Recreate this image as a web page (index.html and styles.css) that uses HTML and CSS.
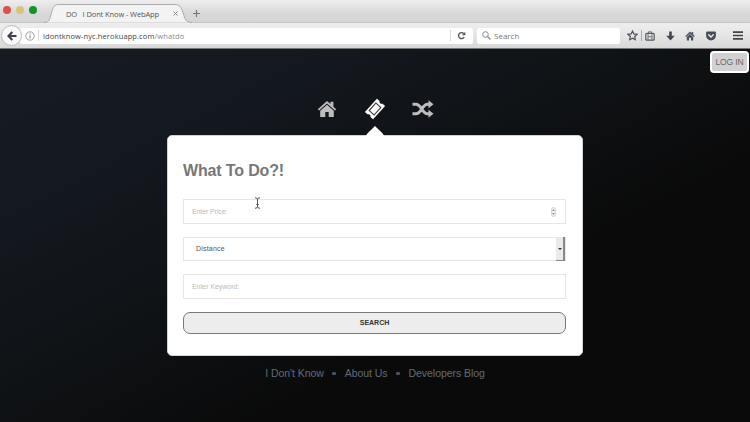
FILE: index.html
```html
<!DOCTYPE html>
<html lang="en">
<head>
<meta charset="utf-8">
<title>DO I Dont Know - WebApp</title>
<link rel="stylesheet" href="styles.css">
</head>
<body>
<header class="browser">
  <div class="tabs">
    <div class="lights"><i class="light red"></i><i class="light yellow"></i><i class="light green"></i></div>
    <div class="tab">
      <svg class="tab-shape" width="148" height="19" viewBox="0 0 158 19" preserveAspectRatio="none"><path d="M0 18.500C6 18.500 6 15 8 9C9.500 3 11 .5 16 .5H139C145 .5 146.500 3 148.500 9C150.500 15 151 18.500 158 18.500" fill="#f3f3f3" stroke="#aaa"/></svg>
      <span class="tab-title">DO &nbsp; I Dont Know - WebApp</span>
      <svg class="tab-close" width="5" height="5" viewBox="0 0 5 5"><path d="M.5.5l4 4M4.500.5l-4 4" stroke="#888"/></svg>
    </div>
    <svg class="plus" width="7" height="7" viewBox="0 0 7 7"><path d="M3.500 0v7M0 3.500h7" stroke="#777" stroke-width="1.200"/></svg>
  </div>
  <div class="toolbar">
    <div class="back"><svg width="10" height="10" viewBox="0 0 10 10"><path d="M5.300 1L1.500 5l3.800 4M2 5h7.500" fill="none" stroke="#3b424c" stroke-width="2.100"/></svg></div>
    <div class="address">
      <svg width="10" height="10" viewBox="0 0 10 10"><circle cx="5" cy="5" r="4.200" fill="none" stroke="#888" stroke-width=".8"/><path d="M5 4.400v3M5 2.400v1" stroke="#777"/></svg>
      <span class="rule"></span>
      <span class="url">idontknow-nyc.herokuapp.com<em>/whatdo</em></span>
      <span class="rule"></span>
      <svg class="reload" width="9" height="9" viewBox="0 0 9 9"><path d="M7.200 6A3 3 0 1 1 6.700 2.500" fill="none" stroke="#555" stroke-width="1.400"/><path d="M8.300.8v3.500H4.800z" fill="#555"/></svg>
    </div>
    <div class="find">
      <svg width="9" height="9" viewBox="0 0 9 9"><circle cx="3.500" cy="3.500" r="2.800" fill="none" stroke="#888"/><path d="M5.500 5.500l3 3" stroke="#888" stroke-width="1.200"/></svg>
      <span>Search</span>
    </div>
    <div class="tools">
      <svg width="11" height="11" viewBox="0 0 11 11"><path d="M5.500 1l1.400 2.900 3.100.4-2.300 2.200.6 3.200-2.800-1.500-2.800 1.500.6-3.200L1 4.300l3.100-.4z" fill="none" stroke="#4c525b" stroke-width="1.200"/></svg>
      <span class="rule dark"></span>
      <svg width="10" height="10" viewBox="0 0 10 10"><rect x=".8" y="2.300" width="8.400" height="6.900" rx="1" fill="none" stroke="#555b63" stroke-width="1.200"/><path d="M3.500 2.300V.8h3v1.500M3 2.500v6.500M7 2.500v6.500M3 5.700h4" fill="none" stroke="#666c73" stroke-width=".9"/></svg>
      <svg class="t-down" width="9" height="10" viewBox="0 0 9 10"><path d="M3.200.5h2.600v4.300h3L4.500 9.500.2 4.800h3z" fill="#414852"/></svg>
      <svg class="t-home" width="10" height="10" viewBox="0 0 10 10"><path d="M5 .5l1.800 1.700V1h1.400v2.600l1.600 1.600-.8.800-4-3.500L1 6l-.8-.8zM5 2.900l3.200 3V9.500H6V6.800H4v2.700H1.800V5.900z" fill="#4b525b"/></svg>
      <svg class="t-pocket" width="10" height="10" viewBox="0 0 10 10"><path d="M1.500.5h7A1.300 1.300 0 0 1 9.900 1.900V4.600a4.900 4.900 0 0 1-9.800 0V1.900A1.300 1.300 0 0 1 1.500.5z" fill="#454c56"/><path d="M2.700 3.800L5 6l2.300-2.200" fill="none" stroke="#eee" stroke-width="1.300" stroke-linecap="round"/></svg>
      <svg class="t-menu" width="10" height="9" viewBox="0 0 10 9"><path d="M0 1.200h10M0 4.500h10M0 7.800h10" stroke="#444" stroke-width="1.700"/></svg>
    </div>
  </div>
</header>
<main class="page">
  <button class="login">LOG IN</button>
  <nav class="choices">
    <svg width="20" height="18" viewBox="0 0 20 18"><path d="M10 1L13.500 4.100V1.800H16.400V6.700L19.200 9.200 18 10.500 10 3.400 2 10.500 .8 9.200z" fill="#bdbdbd"/><path d="M10 4.800L16.800 10.800V17H11.700V12H8.300V17H3.200V10.800z" fill="#bdbdbd"/></svg>
    <svg class="ticket" width="22" height="22" viewBox="0 0 22 22"><g transform="rotate(-48 11 11)"><path d="M2 5.500H20V9A2.200 2.200 0 0 0 20 13V16.500H2V13A2.200 2.200 0 0 0 2 9z" fill="#fff"/><path d="M6 7.700H16V14.300H6z" fill="none" stroke="#383838" stroke-width="1.100"/></g></svg>
    <svg width="22" height="18" viewBox="0 0 22 18"><path d="M.5 4.200H4C9.500 4.200 10 13.800 15.500 13.800H17M.5 13.800H4C9.500 13.800 10 4.200 15.500 4.200H17" fill="none" stroke="#bdbdbd" stroke-width="3"/><path d="M16.500.2L21.500 4.200 16.500 8.200zM16.500 9.800L21.500 13.800 16.500 17.800z" fill="#bdbdbd"/></svg>
  </nav>
  <section class="card">
    <svg class="pointer" width="18" height="10" viewBox="0 0 18 10"><path d="M0 10C1 7 3 6 5 4L9 0l4 4c2 2 4 3 5 6z" fill="#fff"/></svg>
    <h1>What To Do?!</h1>
    <div class="field"><span>Enter Price:</span>
      <svg width="5" height="10" viewBox="0 0 5 10"><rect x=".5" y=".5" width="4" height="9" rx="2" fill="#f3f3f3" stroke="#d6d6d6"/><path d="M1 4l1.500-2L4 4zM1 6l1.500 2L4 6z" fill="#999"/></svg>
    </div>
    <div class="field select"><span>Distance</span><b><i></i></b></div>
    <div class="field"><span class="keyword">Enter Keyword:</span></div>
    <button class="search">SEARCH</button>
    <svg class="cursor" width="7" height="12" viewBox="0 0 7 12"><path d="M1 .7Q3.500.7 3.500 2.500 3.500.7 6 .7M3.500 2v8M1 11.300Q3.500 11.300 3.500 9.500 3.500 11.300 6 11.300M2.300 7.500h2.400" fill="none" stroke="#555"/></svg>
  </section>
  <footer><a>I Don't Know</a><i></i><a>About Us</a><i></i><a>Developers Blog</a></footer>
</main>
</body>
</html>
```
FILE: styles.css
```css
* { box-sizing: border-box; }
body {
  margin: 0;
  width: 750px;
  height: 422px;
  overflow: hidden;
  font-family: "Liberation Sans", Arial, sans-serif;
  background: #0a0a0a;
}
svg { display: block; flex: none; }
button { font-family: inherit; padding: 0; }

.browser { height: 49px; border-bottom: 1px solid #777; }
.tabs {
  height: 23px;
  display: flex;
  align-items: flex-start;
  background: linear-gradient(#efedef, #d8d8d8 60%, #d5d5d5);
  border-bottom: 1px solid #c4c4c4;
}
.lights { display: flex; gap: 5px; padding: 6px 0 0 3px; width: 44px; flex: none; }
.light { width: 8px; height: 8px; border-radius: 50%; }
.red { background: #dc514a; }
.yellow { background: #d8c47d; }
.green { background: #159329; }
.tab {
  position: relative;
  width: 148px;
  height: 19px;
  margin-top: 4px;
  display: flex;
  align-items: center;
  padding: 0 14px 0 22px;
  justify-content: space-between;
}
.tab-shape { position: absolute; left: 0; top: 0; }
.tab-title { position: relative; font: 7.5px "Open Sans", sans-serif; letter-spacing: -.11px; color: #555; white-space: pre; }
.tab-close { position: relative; }
.plus { margin: 10px 0 0 1px; }

.toolbar {
  height: 25px;
  display: flex;
  align-items: center;
  background: linear-gradient(#eee, #e5e5e5 50%, #d8d8d8);
}
.back {
  width: 21px;
  height: 21px;
  margin-left: 1px;
  display: flex;
  align-items: center;
  justify-content: center;
  border: 1px solid #bbb;
  border-radius: 50%;
  background: #fafafa;
  z-index: 1;
}
.address {
  width: 453px;
  height: 16px;
  margin-left: -2px;
  padding: 0 7px 0 5px;
  display: flex;
  align-items: center;
  background: #fff;
  border-radius: 2px;
}
.rule { width: 1px; height: 11px; background: #d8d8d8; margin-left: 3px; }
.url {
  flex: 1;
  margin-left: 4px;
  font: 7.5px "Open Sans", sans-serif;
  color: #444;
  letter-spacing: .1px;
}
.url em { font-style: normal; color: #888; }
.reload { margin-left: 6px; }
.find {
  width: 143px;
  height: 16px;
  margin-left: 4px;
  padding-left: 5px;
  display: flex;
  gap: 3px;
  align-items: center;
  background: #fff;
  border-radius: 2px;
  font: 8px "Open Sans", sans-serif;
  color: #777;
}
.tools { display: flex; align-items: center; margin-left: 7px; }
.rule.dark { background: #aaa; margin: 0 3px; }
.t-down { margin-left: 11px; }
.t-home { margin-left: 10px; }
.t-pocket { margin-left: 11px; }
.t-menu { margin-left: 17px; }

.page {
  position: relative;
  height: 373px;
  display: flex;
  flex-direction: column;
  align-items: center;
  background: linear-gradient(152deg, #161b22 0, #141920 22%, #0f1215 45%, #0a0a0a 66%);
}
.login {
  position: absolute;
  right: 1px;
  top: 2px;
  width: 39px;
  height: 22px;
  border: 2px solid #fff;
  border-radius: 4px;
  background: #d1d1d1;
  color: #666;
  font-size: 8.5px;
  letter-spacing: -.1px;
}
.choices { display: flex; align-items: center; height: 22px; margin: 49px 0 0; }
.ticket { margin: 0 26px 0 27px; }
.card {
  position: relative;
  width: 416px;
  height: 221px;
  margin-top: 15px;
  padding: 25px 16px 0 15px;
  border: 1px solid #cfd3d9;
  border-radius: 5px;
  background: #fff;
}
.pointer { position: absolute; left: 198px; top: -10px; }
.card h1 { margin: 0 0 18px; font-size: 16px; letter-spacing: -.15px; line-height: 20px; color: #777; }
.field {
  height: 25px;
  margin-bottom: 13px;
  padding: 0 9px 0 8px;
  display: flex;
  justify-content: space-between;
  align-items: center;
  border: 1px solid #e6e6e6;
  font-size: 7px;
  letter-spacing: -.1px;
  color: #bbb;
}
.select {
  height: 24px;
  padding: 0 0 0 12px;
  color: #555;
  letter-spacing: .2px;
}
.select b {
  width: 9px;
  height: 24px;
  display: flex;
  align-items: center;
  justify-content: center;
  background: #eaeaea;
  border-right: 2px solid #888;
  border-bottom: 1px solid #888;
}
.select i { border: 2px solid transparent; border-top-color: #333; border-bottom: 0; }
.keyword { letter-spacing: -.05px; }
.field span { margin-top: -1px; }
.search {
  display: block;
  width: 100%;
  height: 22px;
  padding-bottom: 2px;
  border: 1px solid #777;
  border-radius: 7px;
  background: #ededed;
  color: #333;
  font-size: 7px;
  font-weight: bold;
}
.cursor { position: absolute; left: 86px; top: 61px; }
footer { display: flex; align-items: center; margin-top: 11px; font-size: 10.5px; letter-spacing: -.05px; line-height: 13px; color: #626b79; }
footer i { width: 4px; height: 3px; margin: 0 9px 0 8px; background: #465363; border-radius: 1px; }
```
